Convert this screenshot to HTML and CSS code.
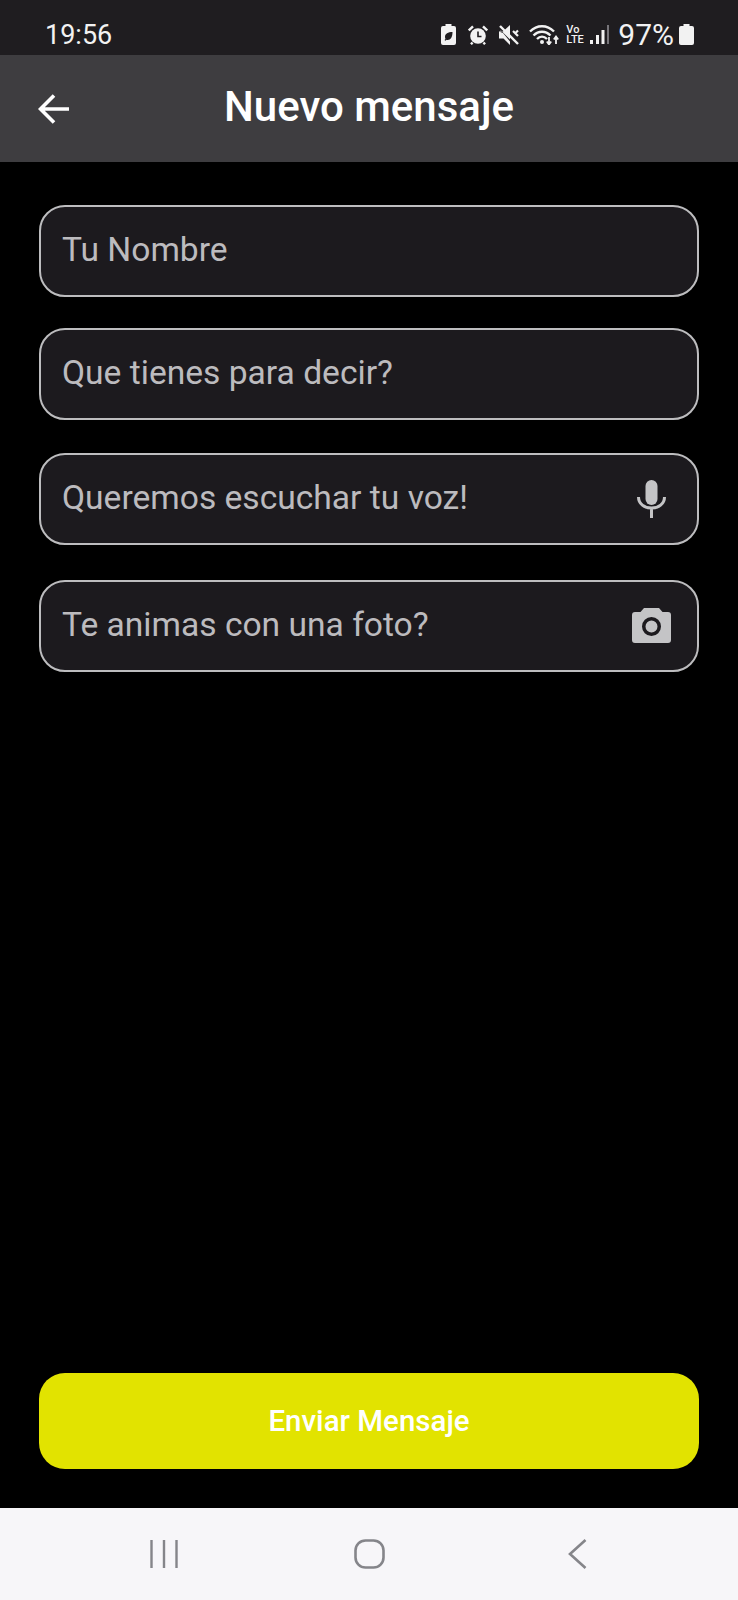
FILE: index.html
```html
<!DOCTYPE html>
<html lang="es">
<head>
<meta charset="utf-8">
<title>Nuevo mensaje</title>
<link rel="stylesheet" href="styles.css">
</head>
<body>
<div class="screen">
  <header class="status">
    <span class="time">19:56</span>
    <div class="status-icons">
      <svg class="i-saver" viewBox="0 0 15 21"><path fill="#f2f2f2" fill-rule="evenodd" d="M4.500 0h6v2H13a2 2 0 0 1 2 2v15a2 2 0 0 1-2 2H2a2 2 0 0 1-2-2V4a2 2 0 0 1 2-2h2.500zM11.500 8C7 8 4 9.500 4 13c0 .8.200 1.500.500 2L3.500 16l1 .8 1-1c3.500 1 6-2 6-7.800z"/></svg>
      <svg class="i-alarm" viewBox="0 0 20 20"><circle cx="10" cy="11" r="7.800" fill="#f2f2f2"/><path d="M.8 5.500 5 1.300M19.200 5.500 15 1.300M4.500 17.500 3 19.300M15.500 17.500 17 19.300" stroke="#f2f2f2" stroke-width="2.400" fill="none"/><path d="M10 6.500V11.500h3.500" stroke="#1f1d20" stroke-width="1.600" fill="none"/></svg>
      <svg class="i-mute" viewBox="0 0 20 20"><path fill="#f2f2f2" d="M0 6.500h4L11 0v14.500L2 5.500zM0 6.500v7h4.500L11 20v-3.500L4 8z"/><path d="M1 1l18 18" stroke="#f2f2f2" stroke-width="2.400"/><path d="M14 6l5 5M19 5.500l-3 3" stroke="#f2f2f2" stroke-width="2.200"/></svg>
      <svg class="i-wifi" viewBox="0 0 30 21"><g fill="none" stroke="#f2f2f2" stroke-width="2.400"><path d="M1 7.500C8 .5 18 .5 25 7.500"/><path d="M4.500 11.500C9.500 6.500 16.500 6.500 21.500 11.500"/><path d="M8 15c3-3 7-3 10 0"/></g><circle cx="13" cy="18" r="2" fill="#f2f2f2"/><path d="M20 13v7M17.800 17.500 20 20.500l2.200-3M27 20v-7M24.800 15.500 27 12.500l2.200 3" fill="none" stroke="#f2f2f2" stroke-width="1.800"/></svg>
      <span class="volte"><span>Vo</span><span>LTE</span></span>
      <svg class="i-signal" viewBox="0 0 19 19"><g fill="#f2f2f2"><rect x="0" y="15" width="3" height="4"/><rect x="6" y="10" width="3" height="9"/><rect x="11.500" y="5" width="3" height="14"/></g><rect x="17" y="0" width="2" height="19" fill="#77757a"/></svg>
      <span class="pct">97%</span>
      <svg class="i-batt" viewBox="0 0 15 21"><path fill="#f2f2f2" d="M4.500 0h6v2H13a2 2 0 0 1 2 2v15a2 2 0 0 1-2 2H2a2 2 0 0 1-2-2V4a2 2 0 0 1 2-2h2.500z"/></svg>
    </div>
  </header>

  <div class="appbar">
    <svg class="back" viewBox="0 0 32 30"><path d="M31 15H3M16 1.500 2.500 15 16 28.500" fill="none" stroke="#fff" stroke-width="3.600"/></svg>
    <h1 class="title">Nuevo mensaje</h1>
  </div>

  <main class="content">
    <div class="fields">
      <div class="field"><span>Tu Nombre</span></div>
      <div class="field"><span>Que tienes para decir?</span></div>
      <div class="field"><span>Queremos escuchar tu voz!</span>
        <svg class="mic" viewBox="0 0 29 38"><rect x="8.500" y="0" width="12" height="25" rx="6" fill="#c4c4c6"/><path d="M1.500 17c0 7 6 11 13 11s13-4 13-11M14.500 28v10" fill="none" stroke="#c4c4c6" stroke-width="3"/></svg>
      </div>
      <div class="field"><span>Te animas con una foto?</span>
        <svg class="cam" viewBox="0 0 39 35"><path fill="#c4c4c6" fill-rule="evenodd" d="M12 0h15l3.500 4H36a3 3 0 0 1 3 3v25a3 3 0 0 1-3 3H3a3 3 0 0 1-3-3V7a3 3 0 0 1 3-3h5.500zM19.500 9a9.500 9.500 0 1 0 0 19 9.500 9.500 0 0 0 0-19zm0 3.500a6 6 0 1 1 0 12 6 6 0 0 1 0-12z"/></svg>
      </div>
    </div>
    <button class="send">Enviar Mensaje</button>
  </main>

  <nav class="navbar">
    <svg class="n-recent" viewBox="0 0 28 28"><path d="M1.500 0v28M14 0v28M26.500 0v28" stroke="#85858a" stroke-width="2.400" fill="none"/></svg>
    <svg class="n-home" viewBox="0 0 31 30"><rect x="1.500" y="1.500" width="28" height="27" rx="10" fill="none" stroke="#85858a" stroke-width="2.600"/></svg>
    <svg class="n-back" viewBox="0 0 19 30"><path d="M17.500 1 2 15l15.500 14" fill="none" stroke="#85858a" stroke-width="2.600"/></svg>
  </nav>
</div>
</body>
</html>
```

FILE: styles.css
```css
* { box-sizing: border-box; margin: 0; padding: 0; }
html, body { background: #000; }
body { font-family: Roboto, "Noto Sans", sans-serif; }
.screen { width: 738px; height: 1600px; display: flex; flex-direction: column; background: #000; overflow: hidden; }

.status { height: 55px; background: #1f1d20; display: flex; align-items: center; justify-content: space-between; padding: 14px 44px 0 45px; color: #f2f2f2; flex: none; }
.time { font-size: 27px; line-height: 30px; }
.status-icons { display: flex; align-items: center; }
.status-icons svg { display: block; flex: none; }
.i-saver { width: 15px; height: 21px; }
.i-alarm { width: 20px; height: 20px; margin-left: 12px; }
.i-mute { width: 20px; height: 20px; margin-left: 11px; }
.i-wifi { width: 30px; height: 21px; margin-left: 10px; }
.volte { display: flex; flex-direction: column; align-items: flex-start; margin-left: 7px; width: 17px; font-size: 11px; line-height: 10px; font-weight: 500; }
.i-signal { width: 19px; height: 19px; margin-left: 7px; }
.pct { font-size: 30px; line-height: 30px; margin-left: 9px; }
.i-batt { width: 15px; height: 21px; margin-left: 5px; }

.appbar { height: 107px; background: #3e3d40; position: relative; display: flex; align-items: center; justify-content: center; flex: none; padding-bottom: 4px; }
.back { position: absolute; left: 38px; top: 39px; width: 32px; height: 30px; }
.title { color: #fff; font-size: 42px; font-weight: 500; line-height: 44px; }

.content { flex: 1; display: flex; flex-direction: column; justify-content: space-between; padding: 43px 39px 39px; }
.fields { display: flex; flex-direction: column; }
.field { height: 92px; border: 2px solid #bdbdbf; border-radius: 26px; background: #1c1a1e; display: flex; align-items: center; justify-content: space-between; padding: 0 30px 4px 21px; color: #bcbbbe; font-size: 33.6px; }
.field + .field { margin-top: 31px; }
.field:nth-child(3) { margin-top: 33px; }
.field:nth-child(4) { margin-top: 35px; }
.mic { width: 29px; height: 38px; margin-top: 4px; margin-right: 1px; }
.cam { width: 39px; height: 35px; margin-right: -4px; margin-top: 2px; }

.send { height: 96px; border: 0; border-radius: 26px; background: #e2e300; color: #fff; font-family: inherit; font-size: 29.5px; font-weight: 500; }

.navbar { height: 92px; background: #f7f6f9; flex: none; display: flex; align-items: center; position: relative; }
.n-recent { width: 28px; height: 28px; margin-left: 150px; }
.n-home { width: 31px; height: 30px; margin-left: 176px; }
.n-back { width: 19px; height: 30px; margin-left: 183px; }
```
